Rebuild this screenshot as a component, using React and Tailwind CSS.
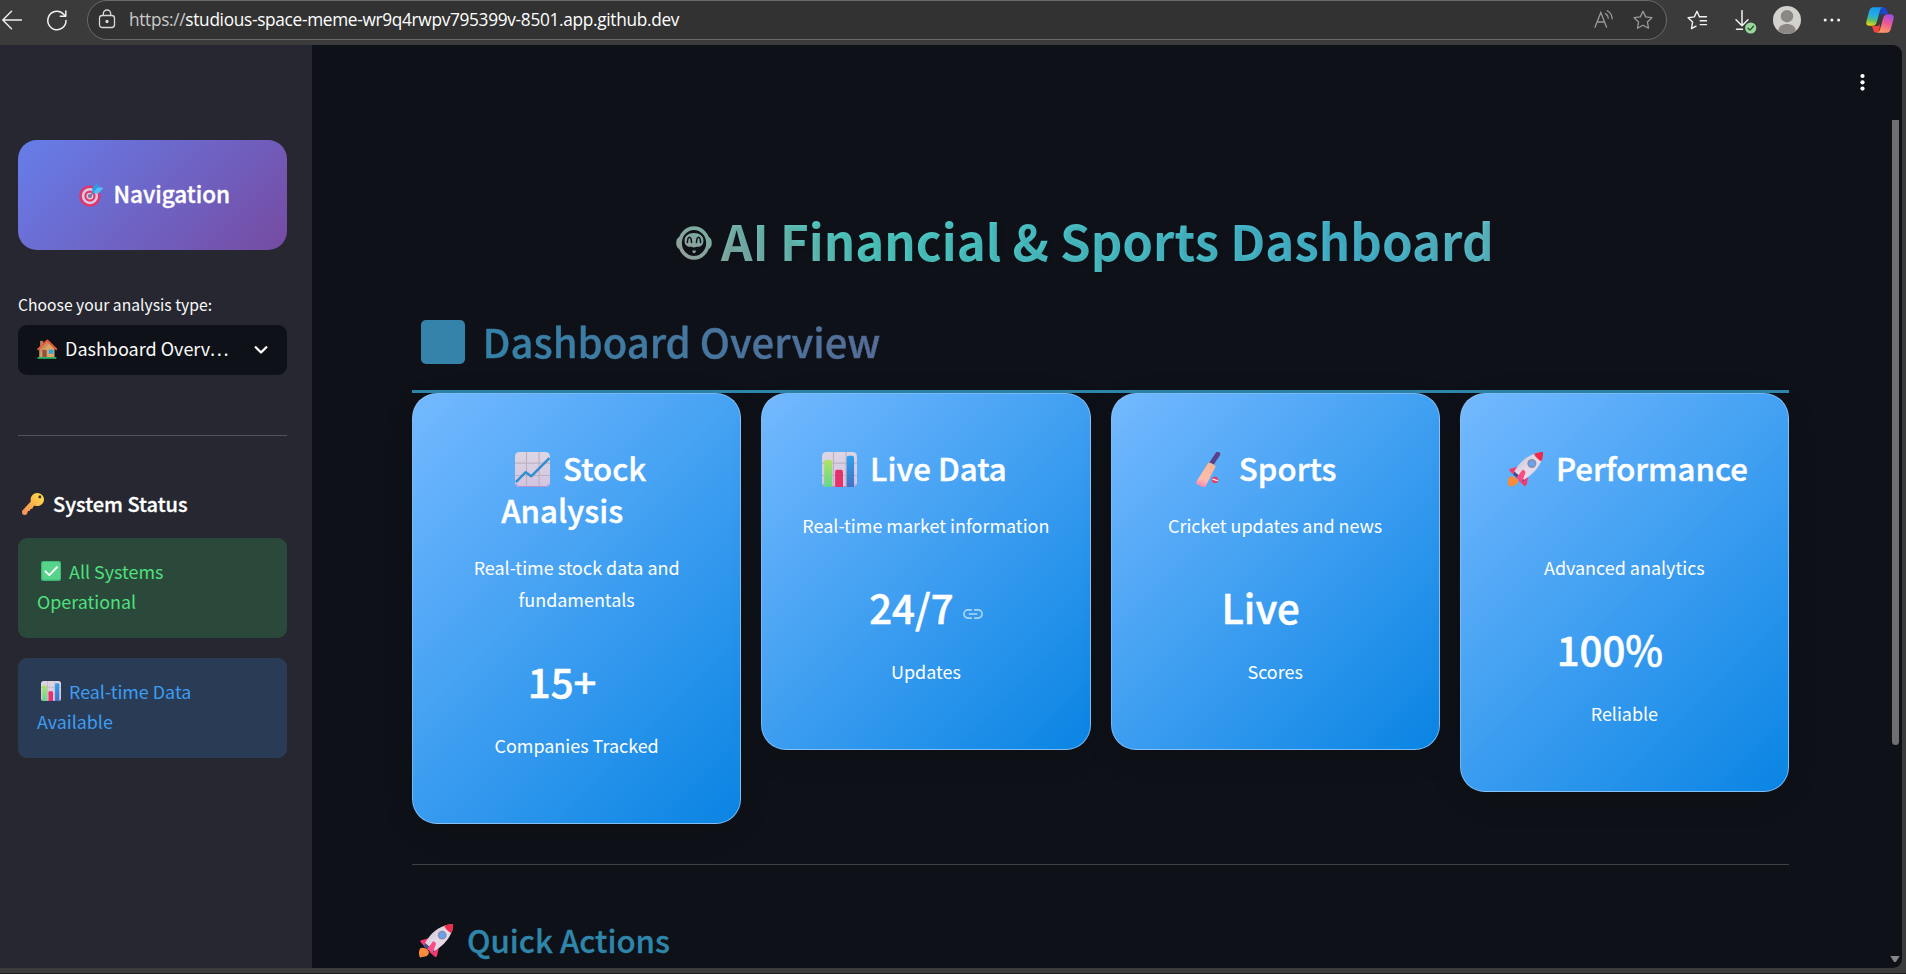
import React, { useId } from "react";

/* ---------- emoji-style drawings ---------- */

function Target({ className }) {
  return (
    <svg viewBox="0 0 32 32" className={className}>
      <circle cx="14" cy="18" r="13.6" fill="#e0356b" />
      <circle cx="14" cy="18" r="10.4" fill="#d6cbe3" />
      <circle cx="14" cy="18" r="7.2" fill="#e5396c" />
      <circle cx="14" cy="18" r="4.4" fill="#d6cbe3" />
      <circle cx="14" cy="18" r="2.6" fill="#8d6b9b" />
      <path d="M14 18 21 11" stroke="#5c7fb8" strokeWidth="1.8" />
      <path d="M17 13.5v-6L23.500 .8l1.200 5.700L31.300 7.700 25 14.400h-6Z" fill="#2b9be6" />
      <path d="M18 13.500 24.700 6.500 31.300 7.700 25 14.400Z" fill="#55bdf5" />
    </svg>
  );
}

function House({ className }) {
  return (
    <svg viewBox="0 0 32 32" className={className}>
      <path d="M5 3h5v9H5Z" fill="#b98163" />
      <path d="M4 15 16 4l12 11v14H4Z" fill="#dba566" />
      <path d="M4 15 16 4l4 3.500L6 22v7H4Z" fill="#c98f5c" />
      <path d="M2 16.500 16.500 2.500 31 16.500" fill="none" stroke="#ec5a3c" strokeWidth="3.200" strokeLinecap="round" strokeLinejoin="round" />
      <path d="M8.500 17.500h7V30h-7Z" fill="#8a5444" />
      <path d="M19 17h7v6.500h-7Z" fill="#26a6ef" />
      <path d="M1 29h30v2.600H1Z" fill="#2dc46f" />
    </svg>
  );
}

function Key({ className }) {
  const id = useId();
  return (
    <svg viewBox="0 0 32 32" className={className}>
      <defs>
        <linearGradient id={id} x1="1" y1="0" x2="0" y2="1">
          <stop offset="0" stopColor="#ffe24d" />
          <stop offset=".55" stopColor="#fbb04a" />
          <stop offset="1" stopColor="#f58a5c" />
        </linearGradient>
      </defs>
      <path
        fill={`url(#${id})`}
        fillRule="evenodd"
        d="M22 0c6 0 10 4.500 10 9.500S28 19 22.500 19c-1.500 0-2.800-.3-4-.8L16 20.500l-1 2.300-2.700.4-.8 2.800-2.700.3L7 31c-1.500 1.400-6.600 1.400-6.900-1.500L0 26 12.800 12.500C11.500 5.500 16 0 22 0Zm4 3.800a1.900 1.900 0 1 0 0 3.800 1.900 1.900 0 0 0 0-3.800Z"
      />
      <circle cx="26" cy="5.700" r="1.800" fill="#3a2d22" />
    </svg>
  );
}

function Check({ className }) {
  return (
    <svg viewBox="0 0 32 32" className={className}>
      <rect width="32" height="32" rx="3.500" fill="#3fb87a" />
      <rect x="2" y="1.500" width="28.500" height="28" rx="2.500" fill="#57d38b" />
      <path d="m7 16.500 6.300 6L25.500 10" fill="none" stroke="#fff" strokeWidth="3" strokeLinecap="round" strokeLinejoin="round" />
    </svg>
  );
}

function Paper() {
  const id = useId();
  return (
    <>
      <defs>
        <linearGradient id={id} x1="0" y1="0" x2="0" y2="1">
          <stop offset="0" stopColor="#ddd6e2" />
          <stop offset="1" stopColor="#d3c4e2" />
        </linearGradient>
      </defs>
      <rect width="32" height="32" rx="4" fill={`url(#${id})`} />
      <path d="M10.500 0v32M22 0v32M0 10.200h32M0 21.500h32" stroke="#bdb2c4" strokeWidth="1.100" />
      <path d="M1 29.500c.8 1.300 1.800 2 3 2h24c1.200 0 2.200-.7 3-2" fill="none" stroke="#b294cf" strokeWidth="1" />
    </>
  );
}

function BarChart({ className }) {
  const a = useId();
  const b = useId();
  return (
    <svg viewBox="0 0 32 32" className={className}>
      <defs>
        <linearGradient id={a} x1="0" y1="0" x2="0" y2="1">
          <stop offset="0" stopColor="#aee45f" />
          <stop offset="1" stopColor="#62d790" />
        </linearGradient>
        <linearGradient id={b} x1="0" y1="0" x2="0" y2="1">
          <stop offset="0" stopColor="#319ff0" />
          <stop offset="1" stopColor="#4372c4" />
        </linearGradient>
      </defs>
      <Paper />
      <path d="M2 32V9q0-1.700 1.700-1.700h3.800Q9.200 7.300 9.200 9v23Z" fill={`url(#${a})`} />
      <path d="M12 32V18q0-1.700 1.700-1.700h3.800q1.700 0 1.700 1.700v14Z" fill="#e5326b" />
      <path d="M22.500 32V5.200q0-1.700 1.700-1.700h3.400q1.700 0 1.700 1.700V32Z" fill={`url(#${b})`} />
    </svg>
  );
}

function LineChart({ className }) {
  return (
    <svg viewBox="0 0 32 32" className={className}>
      <Paper />
      <path d="M.8 27.500 9.800 18.500l5 3.700L31.500 5.500" fill="none" stroke="#2f8fd0" strokeWidth="2.300" strokeLinejoin="round" />
    </svg>
  );
}

function Bat({ className }) {
  const id = useId();
  return (
    <svg viewBox="0 0 32 32" className={className}>
      <defs>
        <linearGradient id={id} x1=".6" y1="0" x2=".3" y2="1">
          <stop offset="0" stopColor="#fbb795" />
          <stop offset=".7" stopColor="#ffbcae" />
          <stop offset="1" stopColor="#ff86ac" />
        </linearGradient>
      </defs>
      <path d="M18.500 11 24.500 2" stroke="#5a4088" strokeWidth="4.400" strokeLinecap="round" />
      <path d="M16 9.500c3 .3 5.500 1.800 6.500 3.800L13.500 31c-.7 1.300-2 1.400-3.200.8L5.800 29.400c-1-.6-1.200-1.700-.6-2.900Z" fill={`url(#${id})`} />
      <circle cx="22" cy="25.500" r="2.900" fill="#ea3f62" />
      <path d="m19.800 24.800 4.600 1.500" stroke="#fff" strokeWidth="1" />
    </svg>
  );
}

function Rocket({ className }) {
  const id = useId();
  return (
    <svg viewBox="0 0 32 32" className={className}>
      <defs>
        <linearGradient id={id} x1="0" y1="0" x2="1" y2="1">
          <stop offset="0" stopColor="#c6bcc6" />
          <stop offset=".5" stopColor="#e4dbe9" />
          <stop offset="1" stopColor="#e6cfe8" />
        </linearGradient>
      </defs>
      <path d="M1 23c2-1.500 6-.5 8 2.500 1 2.500-1 5-3.500 5.200-2 .1-2.700.8-4.500.9C-.3 29.500-.5 25.500 1 23Z" fill="#fb8a3a" />
      <path d="M9 13.500 2.200 15.200c-1 .3-1.200 1-.8 1.800l4.600 5ZM18.500 23l-1.600 7.200c-.3 1-1.100 1.200-2 .7L9.500 26Z" fill="#f5386f" />
      <path d="M24.500 1.500C29 0 32 0 32 0s.3 4.500-1.700 8.500C27.500 15.500 21 22 12 27l-7.500-6.500C8 12.500 15 4.500 24.500 1.500Z" fill={`url(#${id})`} />
      <path d="M23.800 1.800C28 .2 31.300-.2 32 .3c.3 1.700-.1 5.200-1.500 8.200-2.300-1-5.700-4-6.700-6.700Z" fill="#ee2b4a" />
      <path d="m4.500 20.500 1.300-2.700 9.300 8-2.800 1.600Z" fill="#454a8a" />
      <path d="M13.300 16.300c2 .4 2.800 1.200 2.500 3.200l-3.300 8.500c-.8-1.700-3-3.500-5-4.300Z" fill="#fa4b82" />
      <circle cx="21.800" cy="10.500" r="4.100" fill="#8a8ba6" />
      <circle cx="21.800" cy="10.500" r="2.800" fill="#62a4f5" />
    </svg>
  );
}

function Robot({ className }) {
  const id = useId();
  return (
    <svg viewBox="0 0 38 36" className={className}>
      <defs>
        <linearGradient id={id} x1="0" y1="1" x2="1" y2="0">
          <stop offset="0" stopColor="#939f99" />
          <stop offset="1" stopColor="#76aca3" />
        </linearGradient>
      </defs>
      <ellipse cx="19" cy="18" rx="14.800" ry="15.800" fill="none" stroke={`url(#${id})`} strokeWidth="3.900" />
      <path d="M3.500 11.500C1 13 .2 15 .2 18s.8 5 3.300 6.500ZM34.500 11.500c2.500 1.500 3.300 3.500 3.300 6.500s-.8 5-3.300 6.500Z" fill={`url(#${id})`} />
      <path d="M19 7.300c6.200 0 10 3.400 10 8.200 0 4.200-2.700 6.600-5.800 6.600-1.600 0-2.600.7-4.200.7s-2.600-.7-4.200-.7c-3.100 0-5.800-2.400-5.800-6.600 0-4.800 3.800-8.200 10-8.200Z" fill={`url(#${id})`} />
      <path d="M12 17.500c.2-4 .9-5.700 2.200-5.700s2 1.700 2.200 5.700M21.600 17.500c.2-4 .9-5.700 2.200-5.700s2 1.700 2.200 5.700" fill="none" stroke="#0e1117" strokeWidth="1.600" strokeLinecap="round" />
      <path d="M17.200 26h3.800c0 1.800-.8 2.900-1.900 2.900s-1.900-1.100-1.900-2.900Z" fill={`url(#${id})`} />
    </svg>
  );
}

function LinkIcon({ className }) {
  return (
    <svg viewBox="0 0 20 10" className={className} fill="none" stroke="#fff" strokeWidth="1.600" strokeLinecap="round">
      <path d="M8.300 .9H5a4.100 4.100 0 0 0 0 8.200h3.300M11.700 .9H15a4.100 4.100 0 0 1 0 8.200h-3.300M6.300 5h7.400" />
    </svg>
  );
}

/* ---------- browser toolbar ---------- */

function CopilotLogo({ className }) {
  const a = useId();
  const b = useId();
  return (
    <svg viewBox="0 0 28 26" className={className}>
      <defs>
        <linearGradient id={a} x1=".5" y1="0" x2=".3" y2="1">
          <stop offset="0" stopColor="#1599ee" />
          <stop offset=".45" stopColor="#28aee0" />
          <stop offset=".7" stopColor="#57bd6c" />
          <stop offset="1" stopColor="#f5d90a" />
        </linearGradient>
        <linearGradient id={b} x1=".7" y1="0" x2=".4" y2="1">
          <stop offset="0" stopColor="#a14be8" />
          <stop offset=".5" stopColor="#ee5a92" />
          <stop offset="1" stopColor="#fb9d62" />
        </linearGradient>
      </defs>
      <path d="M15 .3h2.500c1.800 0 2.700 1 3.200 2.700L22 7h-4.500c-2 0-3 .8-3.600 2.600Z" fill="#1d46cf" />
      <path d="M13 25.700h-2.500c-1.800 0-2.700-1-3.200-2.700L6 19h4.500c2 0 3-.8 3.600-2.600Z" fill="#f0453e" />
      <path d="M7.500.3h9c-1.500.5-2 1.600-2.500 3.300L10.800 15c-.8 2.700-2 3.800-4.600 3.800H3.500C.5 18.800-.2 16.500.5 14L3.200 4C4 1.500 5.200.3 7.500.3Z" fill={`url(#${a})`} />
      <path d="M20.500 25.700h-9c1.500-.5 2-1.600 2.500-3.300L17.200 11c.8-2.700 2-3.800 4.600-3.800h2.700c3 0 3.700 2.300 3 4.800L24.800 22c-.8 2.500-2 3.700-4.300 3.700Z" fill={`url(#${b})`} />
    </svg>
  );
}

const STAR = "M10 1.300 12.700 6.900 18.900 7.700 14.400 12 15.500 18.200 10 15.200 4.500 18.200 5.600 12 1.100 7.700 7.300 6.900Z";

function Toolbar() {
  return (
    <header className="flex h-[45px] shrink-0 items-start bg-[#3b3b3b]">
      <svg viewBox="0 0 20 20" className="mt-[10px] ml-[2px] size-5" fill="none" stroke="#f0f0f0" strokeWidth="1.400" strokeLinecap="round" strokeLinejoin="round">
        <path d="M19.500 10H1M9.500 1.200 .8 10l8.700 8.800" />
      </svg>
      <svg viewBox="0 0 20 21" className="mt-[9.500px] ml-[25px] h-[21px] w-5" fill="none" stroke="#f0f0f0" strokeWidth="1.500" strokeLinecap="round" strokeLinejoin="round">
        <path d="M19 10.500a9.100 9.300 0 1 1-2.300-6.200L18.300 6M18.800 1v5.300h-5.500" />
      </svg>
      <div className="ml-5 flex h-10 w-[1580px] items-center rounded-full border border-[#6a6a6a] bg-[#323232] pr-[13px] pl-[10px]">
        <svg viewBox="0 0 18 20" className="mb-[2px] h-[20px] w-[18px]" fill="none" stroke="#d8d8d8" strokeWidth="1.300">
          <rect x="1.500" y="6.500" width="15" height="12" rx="2.800" />
          <path d="M5.300 6.500V4.700a3.700 3.700 0 0 1 7.400 0v1.800" />
          <circle cx="9" cy="12.500" r="1" fill="#fff" />
        </svg>
        <span className="mb-[1px] ml-[13px] font-['Open_Sans',sans-serif] text-[17.25px] tracking-[-0.31px] whitespace-nowrap text-white">
          <span className="text-[#c9c9c9]">https://</span>studious-space-meme-wr9q4rwpv795399v-8501.app.github.dev
        </span>
        <svg viewBox="0 0 20 18" className="mb-[2px] ml-auto h-[18px] w-5" fill="none" stroke="#9a9a9a" strokeWidth="1.300" strokeLinecap="round">
          <path d="M1 17.200 6.800 2.500l5.800 14.700M3.100 12h7.500M11.500 3.600c1.800 1 2.700 2.600 2.800 4.600M13.300.8c3 1.600 4.700 4.300 4.900 8" />
        </svg>
        <svg viewBox="0 0 20 20" className="mb-[1px] ml-[19px] size-[20px]" fill="none" stroke="#9a9a9a" strokeWidth="1.300" strokeLinejoin="round">
          <path d={STAR} />
        </svg>
      </div>
      <svg viewBox="0 0 21 20" className="mt-[10px] ml-[20px] h-5 w-[21px]" fill="none" stroke="#f2f2f2" strokeWidth="1.400" strokeLinecap="round" strokeLinejoin="round">
        <path d="M12.500 7 10 1.300 7.300 6.900 1.100 7.700 5.600 12 4.500 18.700 9 16.200M13.200 6.800h6.300M13.200 10.700h6.300M13.200 14.600h6.300" />
      </svg>
      <svg viewBox="0 0 22 24" className="mt-[10px] ml-[27px] h-6 w-[22px]" fill="none" stroke="#f2f2f2" strokeWidth="1.500" strokeLinecap="round" strokeLinejoin="round">
        <path d="M7 .7v15M1 9.800l6 6 6-6M1.500 19.300h6" />
        <circle cx="15.700" cy="18" r="5.600" fill="#98d89b" stroke="none" />
        <path d="m13 18.200 2 1.900 3.500-3.800" stroke="#2c4a2d" strokeWidth="1.300" />
      </svg>
      <svg viewBox="0 0 28 28" className="mt-[6px] ml-[16px] size-7">
        <circle cx="14" cy="14" r="14" fill="#d3d1cd" />
        <circle cx="14" cy="10.200" r="6.200" fill="#8b8783" />
        <path d="M5.300 25c.2-5 4-7 8.700-7s8.500 2 8.700 7A14 14 0 0 1 14 28a14 14 0 0 1-8.700-3Z" fill="#8b8783" />
      </svg>
      <svg viewBox="0 0 18 4" className="mt-[18px] ml-[22px] h-1 w-[18px]" fill="#f2f2f2">
        <circle cx="2.200" cy="2" r="1.500" />
        <circle cx="8.900" cy="2" r="1.500" />
        <circle cx="15.600" cy="2" r="1.500" />
      </svg>
      <CopilotLogo className="mt-[7px] ml-[25px] h-[26px] w-7" />
    </header>
  );
}

/* ---------- sidebar ---------- */

function StatusBox({ className, icon, first, second }) {
  return (
    <div className={`h-[100px] rounded-[9px] pt-[18px] pl-[19px] text-[17.9px] leading-[30px] ${className}`}>
      <div className="flex items-center">
        {icon}
        <span className="ml-2">{first}</span>
      </div>
      <div>{second}</div>
    </div>
  );
}

function Sidebar() {
  return (
    <aside className="w-[312px] shrink-0 bg-[#262730] px-[18px] pt-[95px] text-[#fafafa]">
      <div className="mr-[7px]">
        <div className="flex h-[110px] items-center rounded-[19px] bg-[linear-gradient(135deg,#667eea_0%,#764ba2_100%)] pb-[4px] pl-[61px]">
          <Target className="mt-[3px] size-[25px]" />
          <span className="ml-[9.5px] text-[22.5px] leading-[30px] font-medium text-white [-webkit-text-stroke:0.4px]">Navigation</span>
        </div>
        <div className="mt-[43px] text-[15.7px] leading-6">Choose your analysis type:</div>
        <div className="mt-[8px] flex h-[50px] items-center rounded-[9px] bg-[#0e1117] pb-[4px] pl-[19px] text-[18px]">
          <House className="mt-[1px] size-5" />
          <span className="ml-[8px] leading-[30px]">Dashboard Overv…</span>
          <svg viewBox="0 0 14 8" className="mt-[3px] mr-[19px] ml-auto h-2 w-[14px]" fill="none" stroke="#fff" strokeWidth="2.300" strokeLinecap="round" strokeLinejoin="round">
            <path d="m1.700 1.300 5.300 5.200 5.300-5.200" />
          </svg>
        </div>
        <div className="mt-[60px] h-px bg-[#52535b]" />
        <div className="mt-[49px] flex h-9 items-center pl-[4px]">
          <Key className="mt-[2px] size-[22px]" />
          <span className="mt-px ml-[9px] text-[20px] leading-9 font-medium text-white [-webkit-text-stroke:0.3px]">System Status</span>
        </div>
        <StatusBox
          className="mt-[17px] bg-[#2a493b] text-[#4fe07d]"
          icon={<Check className="mb-[1px] ml-[4px] size-5" />}
          first="All Systems"
          second="Operational"
        />
        <StatusBox
          className="mt-5 bg-[#2a3c55] text-[#3d9df3]"
          icon={<BarChart className="mb-[1px] ml-[4px] size-5" />}
          first="Real-time Data"
          second="Available"
        />
      </div>
    </aside>
  );
}

/* ---------- main area ---------- */

function Card({ icon, title, title2, spare, lines, value, link, note }) {
  return (
    <div className="rounded-[25px] border border-[#8ec4f8]/80 bg-[linear-gradient(135deg,#74b9ff_0%,#0984e3_100%)] pt-[53px] pb-[62px] text-center text-white shadow-[0_8px_32px_rgba(0,0,0,0.1)]">
      <div className="text-[31.2px] leading-[42px] font-medium [-webkit-text-stroke:0.4px]">
        <div className="flex justify-center">
          {icon}
          <span className="ml-[13px]">{title}</span>
          {!title2 && !spare && <span className="w-[23px]" />}
        </div>
        {title2 && (
          <div className="flex justify-center">
            <span>{title2}</span>
            <span className="w-[29px]" />
          </div>
        )}
        {spare && <div className="h-[42px]" />}
      </div>
      <div className="mt-5 text-[17.95px] leading-8">
        {lines.map((line) => (
          <div key={line}>{line}</div>
        ))}
      </div>
      <div className="mt-10 flex items-center justify-center text-[40.2px] leading-[52px] font-medium [-webkit-text-stroke:0.5px]">
        <span>{value}</span>
        <LinkIcon className={link ? "mt-[13px] ml-[9px] h-[10px] w-5 opacity-60" : "invisible ml-[9px] h-[10px] w-5"} />
      </div>
      <div className="mt-[22px] text-[17.95px] leading-8">{note}</div>
    </div>
  );
}

function Main() {
  return (
    <main className="w-[1377px] shrink-0">
      <h1 className="mt-[145px] flex h-[100px] items-center bg-[linear-gradient(45deg,#FF6B6B,#4ECDC4,#45B7D1,#96CEB4)] bg-clip-text pl-[263px] text-[49.2px] leading-[60px] font-bold text-transparent [text-shadow:2px_2px_4px_rgba(0,0,0,0.1)]">
        <Robot className="mt-[6px] h-[34px] w-[38px]" />
        <span className="ml-[8px] whitespace-nowrap">AI Financial &amp; Sports Dashboard</span>
      </h1>
      <div className="mt-[10px] border-b-[3px] border-[#2E86AB]">
        <h2 className="flex h-[90px] items-center bg-[linear-gradient(90deg,#2E86AB,#A23B72)] bg-clip-text pb-[9px] pl-[8.500px] text-[40px] leading-[60px] font-medium text-transparent [-webkit-text-stroke:0.4px_transparent]">
          <span className="mt-[3px] h-[44px] w-[44.5px] rounded-[5px] bg-[#3583aa]" />
          <span className="ml-[17.5px]">Dashboard Overview</span>
        </h2>
      </div>
      <div className="grid grid-cols-4 items-start gap-5">
        <Card
          icon={<LineChart className="mt-[5px] ml-[8px] size-[35px]" />}
          title="Stock"
          title2="Analysis"
          lines={["Real-time stock data and", "fundamentals"]}
          value="15+"
          note="Companies Tracked"
        />
        <Card
          icon={<BarChart className="mt-[5px] size-[35px]" />}
          title="Live Data"
          lines={["Real-time market information"]}
          value="24/7"
          link
          note="Updates"
        />
        <Card
          icon={<Bat className="mt-[5px] size-[35px]" />}
          title="Sports"
          lines={["Cricket updates and news"]}
          value="Live"
          note="Scores"
        />
        <Card
          icon={<Rocket className="mt-[5px] ml-[7px] size-[35px]" />}
          title="Performance"
          spare
          lines={["Advanced analytics"]}
          value="100%"
          note="Reliable"
        />
      </div>
      <div className="mt-10 h-px bg-[#3e4044]" />
      <h3 className="mt-[54px] flex h-[42px] items-center pl-[7px] text-[31.2px] leading-[42px] font-medium text-[#2E86AB] [-webkit-text-stroke:0.3px]">
        <Rocket className="mt-[1px] size-[34px]" />
        <span className="ml-[14px]">Quick Actions</span>
      </h3>
    </main>
  );
}

export default function App() {
  return (
    <div className="flex h-[974px] w-[1906px] flex-col overflow-hidden border-b border-[#1f1f1f] bg-[#3b3b3b] font-['Noto_Sans_CJK_SC',sans-serif]">
      <Toolbar />
      <div className="flex h-[923px] w-[1902px] overflow-hidden rounded-r-[9px] bg-[#0e1117]">
        <Sidebar />
        <div className="flex grow pl-[100px]">
          <Main />
          <svg viewBox="0 0 5 18" className="mt-[28px] ml-[71px] h-[18px] w-[5px]" fill="#fff">
            <circle cx="2.500" cy="3" r="2.100" />
            <circle cx="2.500" cy="9.300" r="2.100" />
            <circle cx="2.500" cy="15.600" r="2.100" />
          </svg>
          <div className="mr-[2px] ml-auto flex flex-col items-center pb-[6px]">
            <div className="mt-[75px] h-[625px] w-[7px] rounded-b-full bg-[#6e6f72]" />
            <svg viewBox="0 0 10 6" className="mt-auto h-[6px] w-[10px]" fill="#85868a">
              <path d="M.3 0h9.400L6.200 5.500q-1.200 1-2.400 0Z" />
            </svg>
          </div>
        </div>
      </div>
    </div>
  );
}
